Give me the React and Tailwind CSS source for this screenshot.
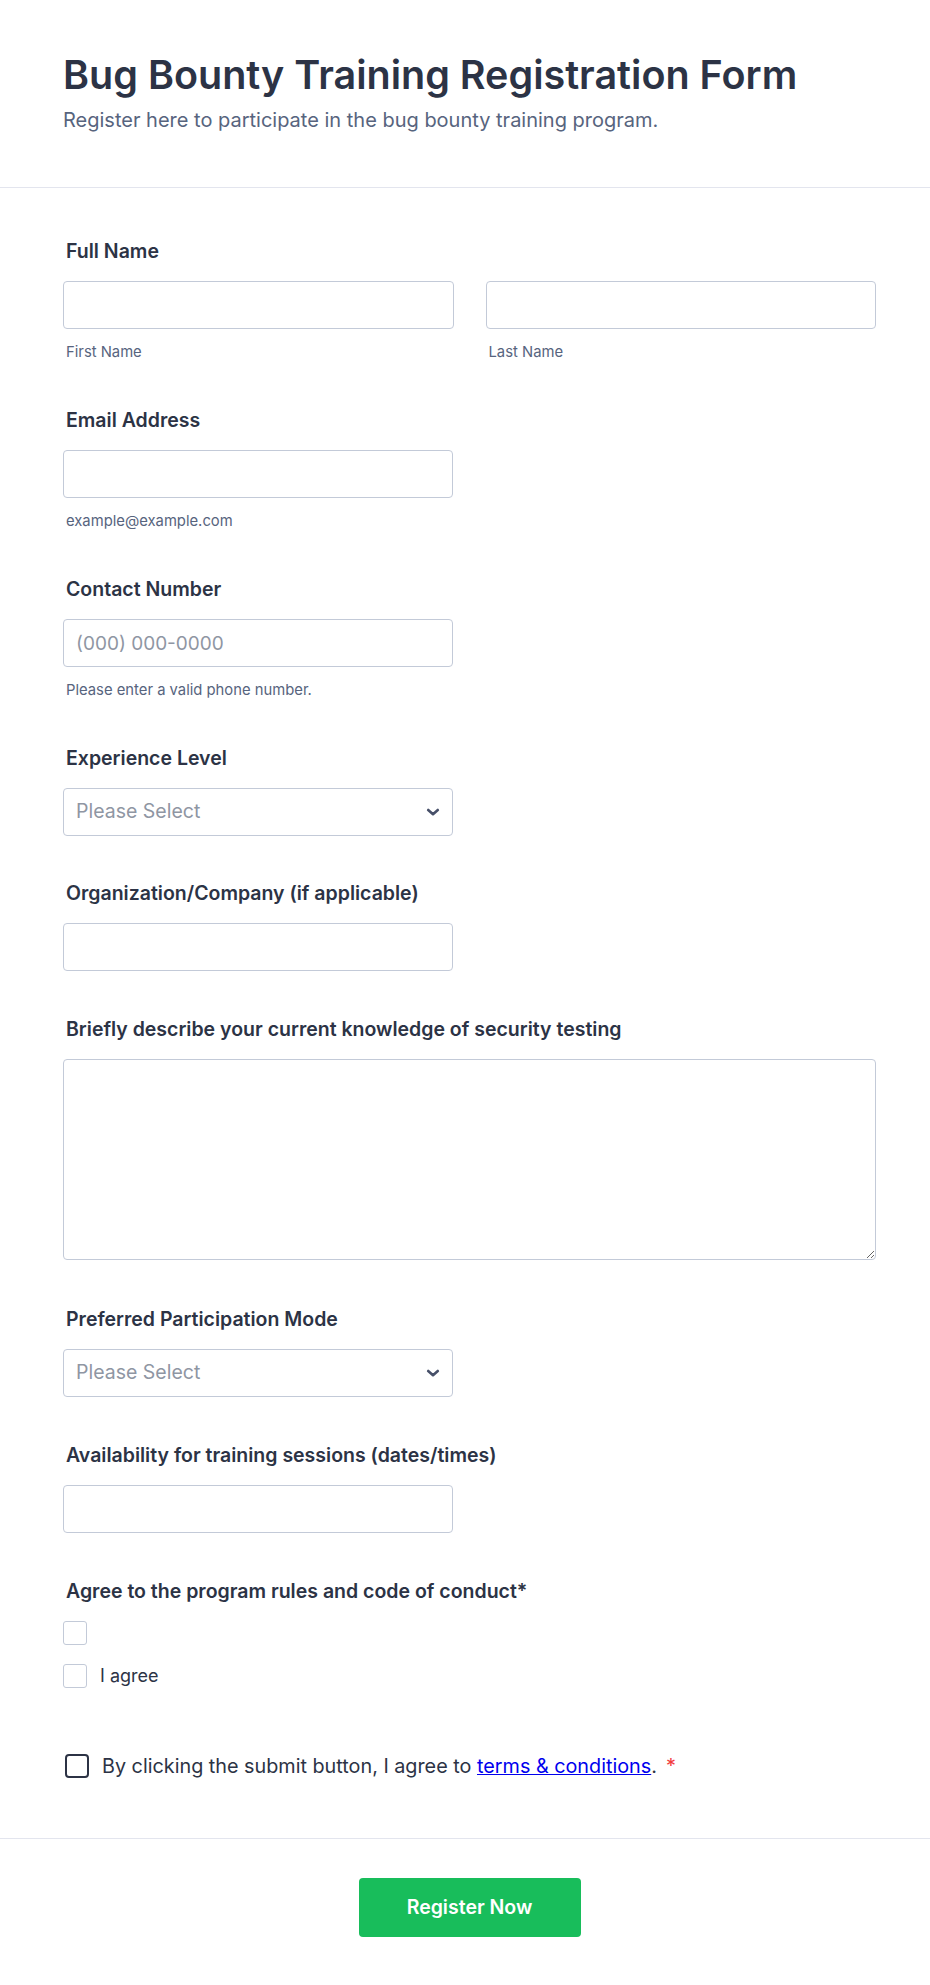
import React from 'react';

const inputCls =
    'h-[48px] w-full rounded-[4px] border border-[#c3cad8] bg-white px-3 text-[19px] text-[#2c3345] placeholder:text-[#8f96a3] outline-none';

const Label = ({ children }) => (
    <label className="block pl-[3px] text-[19.5px] font-semibold leading-[27px] text-[#2c3345] mb-4">{children}</label>
);

const Sub = ({ children }) => (
    <div className="mt-[13px] pl-[3px] text-[14.8px] leading-[21px] text-[#57647e]">{children}</div>
);

const Field = ({ children, extra = '' }) => <li className={'py-[22px] ' + extra}>{children}</li>;

const Chevron = () => (
    <svg className="pointer-events-none absolute right-[12px] top-1/2 -translate-y-1/2" width="16" height="16" viewBox="0 0 16 16" fill="none">
        <path d="M3.2 6 8 10.2 12.8 6" stroke="#475069" strokeWidth="2.6" strokeLinecap="round" strokeLinejoin="round" />
    </svg>
);

const SelectBox = () => (
    <div className="relative w-[390px]">
        <select className="h-[48px] w-full appearance-none rounded-[4px] border border-[#c3cad8] bg-white pl-3 pr-8 text-[19.5px] text-[#8f96a3] outline-none" defaultValue="">
            <option value="">Please Select</option>
        </select>
        <Chevron />
    </div>
);

const Box = ({ dark }) => (
    <input
        type="checkbox"
        className={
            dark
                ? 'h-6 w-6 shrink-0 appearance-none rounded-[4px] border-2 border-[#2c3345] bg-white'
                : 'h-6 w-6 shrink-0 appearance-none rounded-[3px] border border-[#c3cad8] bg-white'
        }
    />
);

export default function App() {
    return (
        <div className="min-h-screen bg-white font-['Inter',sans-serif] text-[#2c3345]">
            {/* header */}
            <div className="border-b border-[#e3e5ee] pl-[63px] pr-[54px] pt-[53px] pb-[53px]">
                <h1 className="text-[39.5px] font-semibold leading-[44px] text-[#2c3345]">Bug Bounty Training Registration Form</h1>
                <p className="mt-[9px] text-[20px] leading-[28px] text-[#57647e]">Register here to participate in the bug bounty training program.</p>
            </div>

            <ul className="pl-[63px] pr-[54px] pt-[28px]">
                <Field>
                    <Label>Full Name</Label>
                    <div className="grid grid-cols-2 gap-x-[32px]">
                        <div>
                            <input className={inputCls} />
                            <Sub>First Name</Sub>
                        </div>
                        <div>
                            <input className={inputCls} />
                            <Sub>Last Name</Sub>
                        </div>
                    </div>
                </Field>

                <Field>
                    <Label>Email Address</Label>
                    <div className="w-[390px]">
                        <input className={inputCls} />
                        <Sub>example@example.com</Sub>
                    </div>
                </Field>

                <Field>
                    <Label>Contact Number</Label>
                    <div className="w-[390px]">
                        <input className={inputCls} placeholder="(000) 000-0000" />
                        <Sub>Please enter a valid phone number.</Sub>
                    </div>
                </Field>

                <Field>
                    <Label>Experience Level</Label>
                    <SelectBox />
                </Field>

                <Field extra="pb-[23px]">
                    <Label>Organization/Company (if applicable)</Label>
                    <div className="w-[390px]">
                        <input className={inputCls} />
                    </div>
                </Field>

                <Field extra="pb-[24px]">
                    <Label>Briefly describe your current knowledge of security testing</Label>
                    <textarea className="block h-[201px] w-full rounded-[4px] border border-[#c3cad8] bg-white px-3 py-2 text-[18px] outline-none" />
                </Field>

                <Field extra="pb-[23px]">
                    <Label>Preferred Participation Mode</Label>
                    <SelectBox />
                </Field>

                <Field extra="pb-[23px]">
                    <Label>Availability for training sessions (dates/times)</Label>
                    <div className="w-[390px]">
                        <input className={inputCls} />
                    </div>
                </Field>

                <Field>
                    <Label>Agree to the program rules and code of conduct*</Label>
                    <div className="flex flex-col gap-[19px]">
                        <div className="flex items-center">
                            <Box />
                        </div>
                        <div className="flex items-center gap-[13px]">
                            <Box />
                            <span className="text-[18px] leading-[24px] text-[#2c3345]">I agree</span>
                        </div>
                    </div>
                </Field>

                <li className="pt-[44px] pb-[60px]">
                    <div className="flex items-center gap-[13px] pl-[2px]">
                        <Box dark />
                        <span className="text-[19.8px] leading-[24px] text-[#2c3345]">
                            By clicking the submit button, I agree to{' '}
                            <a href="#" className="text-[#0000ee] underline">terms &amp; conditions</a>.
                            <span className="ml-[9px] align-top text-[#f23a3c]">*</span>
                        </span>
                    </div>
                </li>
            </ul>

            <div className="border-t border-[#e3e5ee] pl-[63px] pr-[54px] pt-[39px] pb-[49px]">
                <div className="flex justify-center">
                    <button className="h-[59px] w-[222px] rounded-[4px] bg-[#18bd5b] text-[19.5px] font-semibold text-white">Register Now</button>
                </div>
            </div>
        </div>
    );
}
